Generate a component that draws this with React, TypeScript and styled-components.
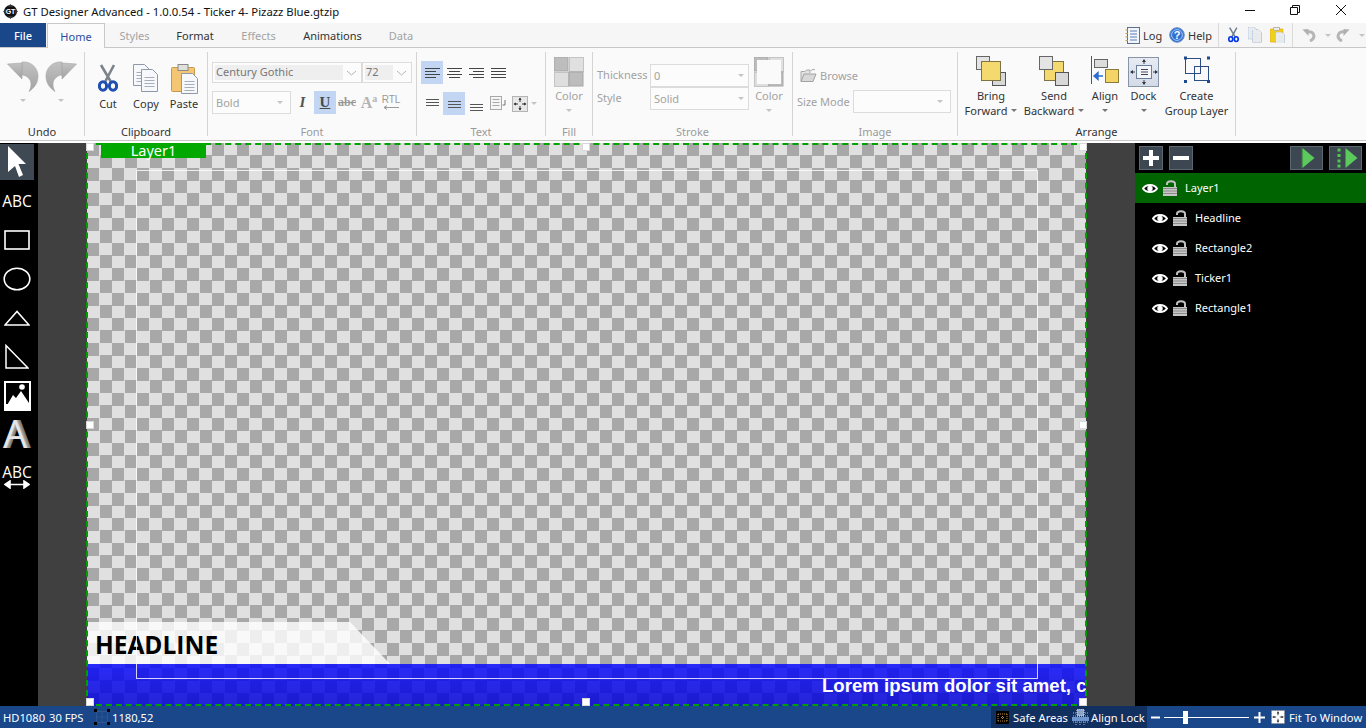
import React from 'react';
import styled, { createGlobalStyle } from 'styled-components';

const GlobalStyle = createGlobalStyle`
  html, body {
    margin: 0;
    padding: 0;
    background: #fff;
    overflow: hidden;
  }
  body {
    font-family: "Noto Sans", "Open Sans", sans-serif;
    font-size: 11px;
    color: #333;
  }
  * { box-sizing: border-box; }
`;

const Shell = styled.div`
  width: 1366px;
  height: 728px;
  display: flex;
  flex-direction: column;
  overflow: hidden;
`;

/* title bar */
const TitleBar = styled.div`
  height: 23px;
  display: flex;
  align-items: center;
  background: #fff;
  padding: 0 2.5px 0 3px;
`;
const TitleText = styled.div`
  margin-left: 5px;
  font-size: 11.3px;
  color: #111;
  flex: 1;
`;
const WinButton = styled.div`
  width: 45.5px;
  height: 23px;
  display: flex;
  align-items: center;
  justify-content: center;
  padding-bottom: 3px;
`;

/* tabs */
const TabBar = styled.div`
  height: 25px;
  display: flex;
  background: #f6f6f6;
  border-bottom: 1px solid #c8c8c8;
`;
const FileTab = styled.div`
  width: 46px;
  height: 24px;
  background: #19478a;
  color: #fff;
  font-weight: 500;
  display: flex;
  align-items: center;
  justify-content: center;
`;
const Tab = styled.div<{ $active?: boolean; $off?: boolean; $w: number }>`
  width: ${p => p.$w}px;
  height: ${p => (p.$active ? 25 : 24)}px;
  display: flex;
  align-items: center;
  justify-content: center;
  color: ${p => (p.$active ? '#2b4f9e' : p.$off ? '#a3a3a3' : '#333')};
  background: ${p => (p.$active ? '#fbfbfb' : 'transparent')};
  border: ${p => (p.$active ? '1px solid #c8c8c8' : 'none')};
  border-bottom: none;
  margin-left: ${p => (p.$active ? 1 : 0)}px;
  z-index: 1;
`;
const QuickTools = styled.div`
  margin-left: auto;
  display: flex;
  align-items: center;
  height: 24px;
`;
const QuickItem = styled.div<{ $w: number; $sep?: boolean }>`
  width: ${p => p.$w}px;
  height: 24px;
  display: flex;
  align-items: center;
  gap: 3px;
  border-right: ${p => (p.$sep ? '1px solid #dadada' : 'none')};
`;
const QuickIcon = styled.span`
  display: flex;
  filter: saturate(1.6) contrast(1.5) brightness(0.92);
`;

/* ribbon */
const Ribbon = styled.div`
  height: 93px;
  margin-bottom: 2px;
  display: flex;
  background: #fafafa;
  border-bottom: 1px solid #c8c8c8;
`;
const Separator = styled.div`
  width: 1px;
  margin: 4px 0;
  background: #d4d4d4;
`;
const Group = styled.div<{ $w: number }>`
  width: ${p => p.$w}px;
  display: flex;
  flex-direction: column;
`;
const GroupBody = styled.div<{ $pad?: string }>`
  height: 76px;
  display: flex;
  padding: ${p => p.$pad || '0'};
`;
const GroupLabel = styled.div<{ $off?: boolean }>`
  height: 16px;
  line-height: 16px;
  text-align: center;
  color: ${p => (p.$off ? '#9a9a9a' : '#333')};
`;
const BigButton = styled.div<{ $w: number; $off?: boolean; $ml?: number; $pt?: number }>`
  width: ${p => p.$w}px;
  margin-left: ${p => p.$ml || 0}px;
  padding-top: ${p => p.$pt || 0}px;
  display: flex;
  flex-direction: column;
  align-items: center;
  color: ${p => (p.$off ? '#a3a3a3' : '#333')};
`;
const IconSlot = styled.div<{ $h: number }>`
  height: ${p => p.$h}px;
  display: flex;
  align-items: flex-start;
  justify-content: center;
`;
const BigLabel = styled.div`
  height: 15px;
  line-height: 15px;
  white-space: nowrap;
  display: flex;
  align-items: center;
  gap: 4px;
`;
const Caret = styled.span<{ $light?: boolean }>`
  display: inline-block;
  width: 0;
  height: 0;
  border-left: 3.5px solid transparent;
  border-right: 3.5px solid transparent;
  border-top: 3.5px solid ${p => (p.$light ? '#c4c4c4' : '#777')};
`;
const SlotCaret = styled(Caret)`
  margin-top: 6px;
`;
const FontColumn = styled.div`
  display: flex;
  flex-direction: column;
  gap: 8px;
`;
const Row = styled.div<{ $gap?: number; $ml?: number }>`
  display: flex;
  align-items: center;
  gap: ${p => p.$gap || 0}px;
  margin-left: ${p => p.$ml || 0}px;
`;
const Combo = styled.div<{ $w: number; $h: number }>`
  width: ${p => p.$w}px;
  height: ${p => p.$h}px;
  border: 1px solid #dcdcdc;
  background: #fcfcfc;
  display: flex;
  align-items: center;
  padding: 2px 2px 2px 3px;
  color: #a2a2a2;
`;
const ComboField = styled.div<{ $w: number }>`
  width: ${p => p.$w}px;
  height: 100%;
  margin-left: -1px;
  background: #efefef;
  display: flex;
  align-items: center;
  color: #777;
  padding: 0 0 2px 1px;
`;
const ComboArrow = styled.div`
  margin-left: auto;
  display: flex;
  align-items: center;
  width: 16px;
  justify-content: center;
`;
const FontTool = styled.div<{ $active?: boolean; $w?: number }>`
  width: ${p => p.$w || 22}px;
  height: 23px;
  display: flex;
  align-items: center;
  justify-content: center;
  background: ${p => (p.$active ? '#c2d5f2' : 'transparent')};
`;
const SerifGlyph = styled.span<{ $c?: string; $italic?: boolean; $under?: boolean; $strike?: boolean; $s?: number }>`
  font-family: "Liberation Serif", serif;
  font-size: ${p => p.$s || 15}px;
  font-weight: 700;
  font-style: ${p => (p.$italic ? 'italic' : 'normal')};
  color: ${p => p.$c || '#555'};
  text-decoration: ${p => (p.$under ? 'underline' : p.$strike ? 'line-through' : 'none')};
`;
const SmallA = styled.sup`
  font-size: 10px;
  line-height: 0;
`;
const RtlGlyph = styled.div`
  display: flex;
  flex-direction: column;
  align-items: center;
  font-family: "Liberation Sans", sans-serif;
  font-size: 10px;
  line-height: 10px;
  color: #9a9a9a;
`;
const TextColumn = styled.div`
  display: flex;
  flex-direction: column;
  gap: 8px;
  padding: 13px 0 0 4px;
`;
const StrokeGrid = styled.div`
  display: grid;
  grid-template-columns: 53px 99px;
  grid-auto-rows: 23px;
  align-items: center;
  padding: 16px 0 0 4px;
  color: #a2a2a2;
`;
const StrokeLabel = styled.span`
  padding-bottom: 2px;
`;
const StrokeInput = styled.div`
  height: 23px;
  border: 1px solid #dcdcdc;
  background: #fcfcfc;
  display: flex;
  align-items: center;
  justify-content: space-between;
  padding: 0 4px 1px 3px;
`;
const ImageColumn = styled.div`
  display: flex;
  flex-direction: column;
  padding: 20px 0 0 4px;
  color: #a2a2a2;
  gap: 7px;
`;
const SizeLabel = styled.span`
  width: 56px;
  white-space: nowrap;
`;
const DockFrame = styled.div`
  width: 31px;
  height: 30px;
  border: 1px solid #8793a6;
  background: linear-gradient(#e6ebf3, #d3dbe8);
  display: flex;
  align-items: center;
  justify-content: center;
  margin-top: 1px;
`;

/* workspace */
const Workspace = styled.div`
  height: 563px;
  display: grid;
  grid-template-columns: 38px 49px 999px 49px 231px;
  background: #000;
`;
const ToolColumn = styled.div`
  background: #000;
  display: flex;
  flex-direction: column;
  align-items: center;
  padding: 1px 4px 0 0;
`;
const ToolSlot = styled.div<{ $active?: boolean; $h: number }>`
  width: 34px;
  height: ${p => p.$h}px;
  display: flex;
  flex-direction: column;
  align-items: center;
  justify-content: center;
  background: ${p => (p.$active ? '#3e4954' : 'transparent')};
  color: #fff;
`;
const ToolText = styled.span`
  font-family: "Open Sans", sans-serif;
  font-size: 15.5px;
  line-height: 16px;
  color: #fff;
`;
const ThreeDLetter = styled.span`
  font-family: "Open Sans", sans-serif;
  font-weight: 400;
  font-size: 38px;
  line-height: 34px;
  color: #e6e6e6;
  text-shadow: 1px 0 0 #b0b0b0, 2px 0 0 #989898, 3px 0 0 #868686, 4px 0 0 #777;
  margin-left: -4px;
`;
const Gutter = styled.div`
  background: #404040;
`;
const Canvas = styled.div`
  position: relative;
  background-color: #a8a8a8;
  background-image: conic-gradient(#e0e0e0 25%, #a8a8a8 0 50%, #e0e0e0 0 75%, #a8a8a8 0);
  background-size: 25px 25px;
`;
const SelectionBox = styled.div`
  position: absolute;
  inset: 0 -1px 0 -1px;
  border: 2px dashed #00a000;
  z-index: 3;
`;
const LayerTag = styled.div`
  position: absolute;
  left: 14px;
  top: 0;
  width: 105px;
  height: 15px;
  background: #00a800;
  color: #fff;
  font-size: 14.5px;
  line-height: 15px;
  text-align: center;
  z-index: 4;
`;
const Handle = styled.div<{ $x: number; $y: number }>`
  position: absolute;
  left: ${p => p.$x}px;
  top: ${p => p.$y}px;
  width: 8px;
  height: 8px;
  background: #fff;
  border: 1px solid #d8d8d8;
  z-index: 5;
`;
const SafeFrame = styled.div`
  position: absolute;
  left: 49px;
  top: 27px;
  width: 902px;
  height: 509px;
  border: 1px solid rgba(255, 255, 255, 0.8);
  z-index: 2;
`;
const HeadlineShape = styled.div`
  position: absolute;
  left: 0;
  top: 479px;
  width: 303px;
  height: 42px;
  background: rgba(255, 255, 255, 0.8);
  clip-path: polygon(0 0, 263px 0, 303px 42px, 0 42px);
`;
const HeadlineText = styled.div`
  position: absolute;
  left: 8px;
  top: 486px;
  font-family: "Open Sans", sans-serif;
  font-weight: 700;
  font-size: 24.5px;
  line-height: 32px;
  color: #000;
`;
const TickerBand = styled.div`
  position: absolute;
  left: 0;
  right: 0;
  top: 521px;
  height: 42px;
  background: linear-gradient(rgba(8, 8, 255, 0.84), rgba(0, 0, 212, 0.84));
  overflow: hidden;
  padding: 11px 0 0 735px;
  font-family: "Liberation Sans", sans-serif;
  font-weight: 700;
  font-size: 18.6px;
  line-height: 22px;
  color: #fff;
  white-space: nowrap;
`;

/* layers */
const LayerPanel = styled.div`
  background: #000;
  display: flex;
  flex-direction: column;
`;
const PanelTools = styled.div`
  height: 30px;
  display: flex;
  align-items: center;
  padding: 0 4px;
  gap: 6px;
`;
const PanelButton = styled.div<{ $w: number; $ml?: number }>`
  width: ${p => p.$w}px;
  height: 24px;
  margin-left: ${p => p.$ml || 0}px;
  background: #3c4751;
  border: 1px solid #5b6771;
  display: flex;
  align-items: center;
  justify-content: center;
`;
const LayerRow = styled.div<{ $active?: boolean; $child?: boolean }>`
  height: 30px;
  display: flex;
  align-items: center;
  gap: 5px;
  padding-left: ${p => (p.$child ? 17 : 7)}px;
  background: ${p => (p.$active ? '#006400' : 'transparent')};
  color: #fff;
`;
const LayerName = styled.span`
  margin-left: 3px;
  padding-bottom: 2px;
`;

/* status */
const StatusBar = styled.div`
  height: 22px;
  background: #19478a;
  color: #fff;
  display: flex;
  align-items: center;
  padding-left: 3px;
  font-size: 11.2px;
`;
const StatusText = styled.span<{ $w?: number; $ml?: number }>`
  width: ${p => (p.$w ? `${p.$w}px` : 'auto')};
  margin-left: ${p => p.$ml || 0}px;
  white-space: nowrap;
`;
const StatusDark = styled.div`
  margin-left: auto;
  width: 156px;
  height: 22px;
  background: #12305f;
  display: flex;
  align-items: center;
  padding-left: 5px;
`;
const SliderTrack = styled.div`
  width: 85px;
  height: 1px;
  background: #fff;
  margin: 0 5px 0 4px;
  position: relative;
`;
const SliderThumb = styled.div`
  position: absolute;
  left: 19px;
  top: -6px;
  width: 5px;
  height: 13px;
  background: #fff;
`;
const ZoomGroup = styled.div`
  width: 219px;
  display: flex;
  align-items: center;
  padding-left: 4px;
`;
const FitSlot = styled.div`
  margin: 0 4px 0 6px;
  display: flex;
`;

/* icons */
const BIG_ARROW = 'M15 1 C25 0 31.5 8 31 16 C30.5 23 27 27 22 30.5 C25 25 24.5 20 21.5 17 C19.5 15 17 14 15 14 Z';

const ArrowIcon = ({ flip, id }: { flip?: boolean; id: string }) => (
  <svg width="32" height="32" viewBox="0 0 32 32" style={flip ? { transform: 'scaleX(-1)' } : undefined}>
    <defs>
      <linearGradient id={id} x1="0" y1="0" x2="0" y2="1">
        <stop offset="0" stopColor="#c2c2c2" />
        <stop offset="1" stopColor="#a2a2a2" />
      </linearGradient>
    </defs>
    <path d={BIG_ARROW} fill={`url(#${id})`} stroke="#a5a5a5" strokeWidth="0.6" />
    <path d="M0.5 3 L15 2 V18 Z" fill={`url(#${id})`} stroke="#a5a5a5" strokeWidth="0.6" />
  </svg>
);

const ScissorsIcon = ({ s = 1 }: { s?: number }) => (
  <svg width={20 * s} height={28 * s} viewBox="0 0 20 28">
    <path d="M3 1 L13 18 M16 1 L7 18" stroke="#7d838c" strokeWidth="2.6" />
    <ellipse cx="5" cy="22" rx="3.6" ry="4.3" fill="none" stroke="#1f4fb0" strokeWidth="3" />
    <ellipse cx="15" cy="22" rx="3.6" ry="4.3" fill="none" stroke="#1f4fb0" strokeWidth="3" />
  </svg>
);

const Sheet = ({ x, y, w, h }: { x: number; y: number; w: number; h: number }) => (
  <g>
    <path d={`M${x} ${y} H${x + w - 5} L${x + w} ${y + 5} V${y + h} H${x} Z`} fill="#f7f8fb" stroke="#8e98a8" />
    <path d={`M${x + 3} ${y + 8} H${x + w - 3} M${x + 3} ${y + 11} H${x + w - 3} M${x + 3} ${y + 14} H${x + w - 3} M${x + 3} ${y + 17} H${x + w - 3}`} stroke="#a4aebd" />
  </g>
);

const CopyIcon = ({ s = 1 }: { s?: number }) => (
  <svg width={26 * s} height={28 * s} viewBox="0 0 26 28">
    <Sheet x={0.5} y={0.5} w={16} h={21} />
    <Sheet x={8.5} y={5.5} w={16} h={22} />
  </svg>
);

const PasteIcon = ({ s = 1 }: { s?: number }) => (
  <svg width={27 * s} height={30 * s} viewBox="0 0 27 30">
    <rect x="0.5" y="3.5" width="23" height="24" rx="1" fill="#f4c572" stroke="#c59a4b" />
    <rect x="7" y="0.5" width="10" height="6" fill="#e0e0dc" stroke="#8a8a8a" />
    <Sheet x={10.5} y={9.5} w={16} h={20} />
  </svg>
);

const Chevron = () => (
  <svg width="11" height="6" viewBox="0 0 11 6">
    <path d="M1 1 L5.5 5 L10 1" fill="none" stroke="#b4b4b4" />
  </svg>
);

const AlignLines = ({ kind }: { kind: 'left' | 'center' | 'right' | 'full' }) => {
  const long = 15;
  const short = 11;
  const x = (w: number) => (kind === 'left' || kind === 'full' ? 0 : kind === 'center' ? (long - w) / 2 : long - w);
  const w = (i: number) => (kind === 'full' || i % 2 === 0 ? long : short);
  return (
    <svg width="15" height="12" viewBox="0 0 15 12">
      {[0, 1, 2, 3].map(i => (
        <rect key={i} x={x(w(i))} y={i * 3 + 1} width={w(i)} height="1" fill="#444" />
      ))}
    </svg>
  );
};

const VAlignLines = ({ dy }: { dy: number }) => (
  <svg width="15" height="16" viewBox="0 0 15 16">
    <g transform={`translate(0 ${dy})`}>
      <rect x="1" y="0" width="13" height="1" fill="#555" />
      <rect x="1" y="3" width="13" height="1" fill="#555" />
      <rect x="1" y="6" width="13" height="1" fill="#555" />
    </g>
  </svg>
);

const TextBoxIcon = () => (
  <svg width="17" height="15" viewBox="0 0 17 15">
    <rect x="0.5" y="0.5" width="11" height="13" fill="#f5f5f5" stroke="#a8a8a8" />
    <path d="M2.5 3.5 H9.5 M2.5 6.5 H9.5 M2.5 9.5 H9.5" stroke="#a8a8a8" />
    <path d="M15 4 V9 H12.5" fill="none" stroke="#777" />
  </svg>
);

const FitIcon = ({ dark, size = 16 }: { dark?: boolean; size?: number }) => (
  <svg width={size} height={size} viewBox="0 0 16 16">
    <rect x="0.5" y="0.5" width="15" height="15" fill={dark ? '#fff' : '#e8e8e8'} stroke="#777" strokeDasharray="1 1" />
    <path d="M8 2 V6 M8 10 V14 M2 8 H6 M10 8 H14" stroke="#333" />
    <path d="M8 1.5 L6.5 4 H9.5 Z M8 14.5 L6.5 12 H9.5 Z M1.5 8 L4 6.5 V9.5 Z M14.5 8 L12 6.5 V9.5 Z" fill="#333" />
  </svg>
);

const FillIcon = () => (
  <svg width="30" height="30" viewBox="0 0 30 30">
    <rect x="0" y="0" width="14" height="14" fill="#bdbdbd" stroke="#a6a6a6" />
    <rect x="15.5" y="0.5" width="14" height="14" fill="#e0e0e0" stroke="#c4c4c4" />
    <rect x="0.5" y="15.5" width="14" height="14" fill="#dedede" stroke="#c4c4c4" />
    <rect x="15" y="15" width="14" height="14" fill="#bdbdbd" stroke="#a6a6a6" />
  </svg>
);

const StrokeIcon = () => (
  <svg width="30" height="30" viewBox="0 0 30 30">
    <rect x="0" y="0" width="14" height="14" fill="#bdbdbd" stroke="#a6a6a6" />
    <rect x="15.5" y="0.5" width="14" height="14" fill="#e0e0e0" stroke="#c4c4c4" />
    <rect x="0.5" y="15.5" width="14" height="14" fill="#dedede" stroke="#c4c4c4" />
    <rect x="15" y="15" width="14" height="14" fill="#bdbdbd" stroke="#a6a6a6" />
    <rect x="3" y="3" width="24" height="24" fill="#fafafa" />
  </svg>
);

const FolderIcon = () => (
  <svg width="17" height="15" viewBox="0 0 17 15">
    <path d="M1 13.5 V3.5 H5 L6.5 2 H10 V5" fill="#e3e3e3" stroke="#a9a9a9" />
    <path d="M1 13.5 L4 6 H16 L13 13.5 Z" fill="#d8d8d8" stroke="#a2a2a2" />
    <path d="M11 3 C12 1 14 1 15 2" fill="none" stroke="#aaa" />
  </svg>
);

const Stack = ({ front }: { front: 'top' | 'bottom' }) => {
  const yellow = <rect x="5.5" y="5.5" width="19" height="19" fill="#f4d96f" stroke="#7d7344" />;
  const g1 = <rect x="0.5" y="0.5" width="13" height="13" fill="#e4e4e4" stroke="#666" />;
  const g2 = <rect x="16.5" y="16.5" width="13" height="13" fill="#d8d8d8" stroke="#555" />;
  return (
    <svg width="31" height="31" viewBox="0 0 31 31">
      {front === 'top' ? (
        <>
          {g1}
          {g2}
          {yellow}
        </>
      ) : (
        <>
          {yellow}
          {g1}
          {g2}
        </>
      )}
    </svg>
  );
};

const AlignIcon = () => (
  <svg width="28" height="29" viewBox="0 0 28 29">
    <path d="M0.5 0 V28" stroke="#2a5db0" />
    <rect x="3.5" y="3.5" width="13" height="8" fill="#dcdcdc" stroke="#666" />
    <rect x="14.5" y="13.5" width="13" height="13" fill="#f4d464" stroke="#8a7a3c" />
    <path d="M3 20 H12 M3 20 L7 16.5 V23.5 Z" fill="#2a6fd0" stroke="#2a6fd0" strokeWidth="1.4" />
  </svg>
);

const DockIcon = () => (
  <svg width="28" height="26" viewBox="0 0 28 26">
    <rect x="6.5" y="6.5" width="15" height="13" fill="#f3f6fb" stroke="#6a7f9a" />
    <path d="M11 10.5 H18 M11 13 H18 M11 15.5 H18 M14 1 V5 M14 21 V25 M1 13 H5 M23 13 H27" stroke="#445" />
    <path d="M14 0 L12 3 H16 Z M14 26 L12 23 H16 Z M0 13 L3 11 V15 Z M28 13 L25 11 V15 Z" fill="#334" />
  </svg>
);

const GroupLayerIcon = () => (
  <svg width="26" height="28" viewBox="0 0 26 28">
    <rect x="1.5" y="2.5" width="15" height="15" fill="none" stroke="#2a4d85" />
    <rect x="10.5" y="10.5" width="14" height="14" fill="none" stroke="#2a4d85" />
    <rect x="0" y="0.5" width="3" height="3" fill="#1f4a90" />
    <rect x="23" y="0.5" width="3" height="3" fill="#1f4a90" />
    <rect x="0" y="24" width="3" height="3" fill="#1f4a90" />
    <rect x="23" y="24" width="3" height="3" fill="#1f4a90" />
  </svg>
);

const LogIcon = () => (
  <svg width="15" height="17" viewBox="0 0 15 17">
    <rect x="2.5" y="0.5" width="12" height="16" fill="#f2f5fa" stroke="#5d6f8c" />
    <path d="M5 4 H12 M5 7 H12 M5 10 H12 M5 13 H12" stroke="#5d7fb5" />
    <path d="M0.5 3 H3 M0.5 6.5 H3 M0.5 10 H3 M0.5 13.5 H3" stroke="#c89a3a" />
  </svg>
);

const HelpIcon = () => (
  <svg width="16" height="16" viewBox="0 0 16 16">
    <circle cx="8" cy="8" r="7.3" fill="#2f6fd4" stroke="#6b8fc4" />
    <circle cx="8" cy="8" r="5.4" fill="none" stroke="#a9c8f2" />
    <text x="8" y="12" textAnchor="middle" fontSize="11" fontWeight="700" fontFamily="Liberation Sans" fill="#fff">?</text>
  </svg>
);

const SmallArrow = ({ flip }: { flip?: boolean }) => (
  <svg width="14" height="14" viewBox="0 0 14 14" style={flip ? { transform: 'scaleX(-1)' } : undefined}>
    <path d="M5 4 C9 3 12 5 12 8 C12 10 10 12 8 13" fill="none" stroke="#b5b5b5" strokeWidth="3" />
    <path d="M0.5 1.5 L6.5 1 V8 Z" fill="#b0b0b0" />
  </svg>
);

const EyeIcon = () => (
  <svg width="16" height="11" viewBox="0 0 16 11">
    <path d="M1 5.5 C4 0.8 12 0.8 15 5.5 C12 10.2 4 10.2 1 5.5 Z" fill="#000" stroke="#fff" strokeWidth="2" />
    <circle cx="8" cy="5.5" r="2.7" fill="#fff" />
  </svg>
);

const LockIcon = () => (
  <svg width="14" height="16" viewBox="0 0 14 16">
    <path d="M4 5 V4 C4 0.4 12 0.4 12 4 V7" fill="none" stroke="#c2c2c2" strokeWidth="2" />
    <rect x="0" y="7" width="14" height="9" fill="#c6c6c6" />
    <path d="M0 8.5 H14 M0 11 H14 M0 13.5 H14" stroke="#8c8c8c" />
  </svg>
);

const SafeIcon = () => (
  <svg width="13" height="13" viewBox="0 0 13 13">
    <rect x="0" y="0" width="13" height="13" fill="#000" />
    <path d="M2 3 H11 M2 10 H11 M2 3 V10 M11 3 V10 M6.5 5 V8 M5 6.5 H8" stroke="#b98a3a" strokeDasharray="1 1" />
  </svg>
);

const AlignLockIcon = () => (
  <svg width="17" height="17" viewBox="0 0 17 17">
    <path d="M1 4 H16 M1 7 H16 M1 13 H16 M4 13 V17 M8 13 V17 M12 13 V17" stroke="#9fb4d2" strokeDasharray="1 1" />
    <rect x="0" y="8" width="17" height="4" fill="#6f95cf" />
    <rect x="5" y="0" width="7" height="7" fill="#8ba3c5" stroke="#dbe4f0" strokeDasharray="1 1" />
  </svg>
);

const DragIcon = () => (
  <svg width="16" height="16" viewBox="0 0 16 16">
    <rect x="2.5" y="2.5" width="11" height="11" fill="none" stroke="#2f5690" />
    <path d="M8 2 V14 M2 8 H14" stroke="#2f5690" />
    <rect x="0" y="0" width="3" height="3" fill="#000" />
    <rect x="13" y="0" width="3" height="3" fill="#000" />
    <rect x="0" y="13" width="3" height="3" fill="#000" />
    <rect x="13" y="13" width="3" height="3" fill="#000" />
  </svg>
);

const PlayIcon = ({ frames }: { frames?: boolean }) => (
  <svg width="28" height="20" viewBox="0 0 28 20">
    {frames ? (
      <>
        <rect x="5.5" y="0.5" width="3" height="3" fill="#4fc74f" />
        <rect x="5.5" y="6" width="3" height="3" fill="#4fc74f" />
        <rect x="5.5" y="11.5" width="3" height="3" fill="#4fc74f" />
        <rect x="5.5" y="16.5" width="3" height="3" fill="#4fc74f" />
        <path d="M13.5 0 L25.5 10 L13.5 20 Z" fill="#5cc95c" />
      </>
    ) : (
      <>
        <rect x="8.5" y="0" width="1" height="20" fill="#2f7f2f" />
        <path d="M9.5 0 L21.5 10 L9.5 20 Z" fill="#5cc95c" />
      </>
    )}
  </svg>
);

const layers = ['Headline', 'Rectangle2', 'Ticker1', 'Rectangle1'];

const handles: [number, number][] = [
  [-1, 0], [495, 0], [992, 0],
  [-1, 278], [992, 278],
  [-1, 555], [495, 555], [992, 555],
];

export default function App() {
  return (
    <Shell>
      <GlobalStyle />
      <TitleBar>
        <svg width="15" height="15" viewBox="0 0 15 15">
          <circle cx="7.5" cy="7.5" r="6.5" fill="#111" />
          <path d="M0 7.5 L3 5 V10 Z M15 7.5 L12 5 V10 Z M7.5 0 L5 3 H10 Z M7.5 15 L5 12 H10 Z" fill="#333" />
          <text x="7.5" y="10" textAnchor="middle" fontSize="7" fontWeight="700" fontFamily="Liberation Sans" fill="#fff">GT</text>
        </svg>
        <TitleText>GT Designer Advanced - 1.0.0.54 - Ticker 4- Pizazz Blue.gtzip</TitleText>
        <WinButton>
          <svg width="10" height="10" viewBox="0 0 10 10"><path d="M0 5.5 H10" stroke="#111" /></svg>
        </WinButton>
        <WinButton>
          <svg width="10" height="10" viewBox="0 0 10 10">
            <path d="M2.5 2.5 V0.5 H9.5 V7.5 H7.5 M0.5 2.5 H7.5 V9.5 H0.5 Z" fill="none" stroke="#111" />
          </svg>
        </WinButton>
        <WinButton>
          <svg width="10" height="10" viewBox="0 0 10 10"><path d="M0 0 L10 10 M10 0 L0 10" stroke="#111" /></svg>
        </WinButton>
      </TitleBar>

      <TabBar>
        <FileTab>File</FileTab>
        <Tab $active $w={58}>Home</Tab>
        <Tab $off $w={59}>Styles</Tab>
        <Tab $w={62}>Format</Tab>
        <Tab $off $w={65}>Effects</Tab>
        <Tab $w={83}>Animations</Tab>
        <Tab $off $w={54}>Data</Tab>
        <QuickTools>
          <QuickItem $w={44}><LogIcon />Log</QuickItem>
          <QuickItem $w={50} $sep><HelpIcon />Help</QuickItem>
          <QuickItem $w={9} />
          <QuickItem $w={20}><QuickIcon><ScissorsIcon s={0.55} /></QuickIcon></QuickItem>
          <QuickItem $w={22}><QuickIcon><CopyIcon s={0.55} /></QuickIcon></QuickItem>
          <QuickItem $w={23} $sep><QuickIcon><PasteIcon s={0.55} /></QuickIcon></QuickItem>
          <QuickItem $w={9} />
          <QuickItem $w={23}><SmallArrow /></QuickItem>
          <QuickItem $w={11}><Caret $light /></QuickItem>
          <QuickItem $w={23}><SmallArrow flip /></QuickItem>
          <QuickItem $w={7}><Caret $light /></QuickItem>
        </QuickTools>
      </TabBar>

      <Ribbon>
        <Group $w={84}>
          <GroupBody $pad="13px 0 0 4px">
            <BigButton $w={38}>
              <IconSlot $h={38}><ArrowIcon id="undoFill" /></IconSlot>
              <Caret $light />
            </BigButton>
            <BigButton $w={38}>
              <IconSlot $h={38}><ArrowIcon id="redoFill" flip /></IconSlot>
              <Caret $light />
            </BigButton>
          </GroupBody>
          <GroupLabel>Undo</GroupLabel>
        </Group>
        <Separator />
        <Group $w={122}>
          <GroupBody $pad="16px 0 0 4px">
            <BigButton $w={38}>
              <IconSlot $h={32}><ScissorsIcon /></IconSlot>
              <BigLabel>Cut</BigLabel>
            </BigButton>
            <BigButton $w={38}>
              <IconSlot $h={32}><CopyIcon /></IconSlot>
              <BigLabel>Copy</BigLabel>
            </BigButton>
            <BigButton $w={38}>
              <IconSlot $h={32}><PasteIcon /></IconSlot>
              <BigLabel>Paste</BigLabel>
            </BigButton>
          </GroupBody>
          <GroupLabel>Clipboard</GroupLabel>
        </Group>
        <Separator />
        <Group $w={208}>
          <GroupBody $pad="14px 0 0 4px">
            <FontColumn>
              <Row $gap={0}>
                <Combo $w={150} $h={21}>
                  <ComboField $w={128}>Century Gothic</ComboField>
                  <ComboArrow><Chevron /></ComboArrow>
                </Combo>
                <Combo $w={50} $h={21}>
                  <ComboField $w={29}>72</ComboField>
                  <ComboArrow><Chevron /></ComboArrow>
                </Combo>
              </Row>
              <Row>
                <Combo $w={79} $h={23}>
                  Bold
                  <ComboArrow><Caret $light /></ComboArrow>
                </Combo>
                <FontTool $w={23}><SerifGlyph $italic>I</SerifGlyph></FontTool>
                <FontTool $active><SerifGlyph $under $c="#4a4a4a">U</SerifGlyph></FontTool>
                <FontTool><SerifGlyph $strike $c="#999" $s={12}>abc</SerifGlyph></FontTool>
                <FontTool><SerifGlyph $c="#b4b4b4" $s={16}>A<SmallA>a</SmallA></SerifGlyph></FontTool>
                <FontTool>
                  <RtlGlyph>RTL<svg width="15" height="5" viewBox="0 0 15 5"><path d="M0 2.5 H15 M0 2.5 L3 0.5 M0 2.5 L3 4.5" stroke="#9a9a9a" fill="none" /></svg></RtlGlyph>
                </FontTool>
              </Row>
            </FontColumn>
          </GroupBody>
          <GroupLabel $off>Font</GroupLabel>
        </Group>
        <Separator />
        <Group $w={128}>
          <GroupBody>
            <TextColumn>
              <Row>
                <FontTool $active><AlignLines kind="left" /></FontTool>
                <FontTool><AlignLines kind="center" /></FontTool>
                <FontTool><AlignLines kind="right" /></FontTool>
                <FontTool><AlignLines kind="full" /></FontTool>
              </Row>
              <Row>
                <FontTool><VAlignLines dy={3} /></FontTool>
                <FontTool $active><VAlignLines dy={5} /></FontTool>
                <FontTool><VAlignLines dy={8} /></FontTool>
                <FontTool><TextBoxIcon /></FontTool>
                <FontTool><FitIcon /></FontTool>
                <Caret $light />
              </Row>
            </TextColumn>
          </GroupBody>
          <GroupLabel $off>Text</GroupLabel>
        </Group>
        <Separator />
        <Group $w={46}>
          <GroupBody $pad="9px 0 0 0">
            <BigButton $w={46} $off>
              <IconSlot $h={31}><FillIcon /></IconSlot>
              <BigLabel>Color</BigLabel>
              <IconSlot $h={15}><SlotCaret $light /></IconSlot>
            </BigButton>
          </GroupBody>
          <GroupLabel $off>Fill</GroupLabel>
        </Group>
        <Separator />
        <Group $w={199}>
          <GroupBody>
            <StrokeGrid>
              <StrokeLabel>Thickness</StrokeLabel>
              <StrokeInput>0<Caret $light /></StrokeInput>
              <StrokeLabel>Style</StrokeLabel>
              <StrokeInput>Solid<Caret $light /></StrokeInput>
            </StrokeGrid>
            <BigButton $w={30} $ml={5} $pt={9} $off>
              <IconSlot $h={31}><StrokeIcon /></IconSlot>
              <BigLabel>Color</BigLabel>
              <IconSlot $h={15}><SlotCaret $light /></IconSlot>
            </BigButton>
          </GroupBody>
          <GroupLabel $off>Stroke</GroupLabel>
        </Group>
        <Separator />
        <Group $w={164}>
          <GroupBody>
            <ImageColumn>
              <Row $gap={3} $ml={3}><FolderIcon />Browse</Row>
              <Row>
                <SizeLabel>Size Mode</SizeLabel>
                <Combo $w={98} $h={23}><ComboArrow><Caret $light /></ComboArrow></Combo>
              </Row>
            </ImageColumn>
          </GroupBody>
          <GroupLabel $off>Image</GroupLabel>
        </Group>
        <Separator />
        <Group $w={277}>
          <GroupBody $pad="8px 0 0 0">
            <BigButton $w={62} $ml={2}>
              <IconSlot $h={32}><Stack front="top" /></IconSlot>
              <BigLabel>Bring</BigLabel>
              <BigLabel>Forward <Caret /></BigLabel>
            </BigButton>
            <BigButton $w={64}>
              <IconSlot $h={32}><Stack front="bottom" /></IconSlot>
              <BigLabel>Send</BigLabel>
              <BigLabel>Backward <Caret /></BigLabel>
            </BigButton>
            <BigButton $w={38}>
              <IconSlot $h={32}><AlignIcon /></IconSlot>
              <BigLabel>Align</BigLabel>
              <IconSlot $h={15}><SlotCaret /></IconSlot>
            </BigButton>
            <BigButton $w={39}>
              <IconSlot $h={32}><DockFrame><DockIcon /></DockFrame></IconSlot>
              <BigLabel>Dock</BigLabel>
              <IconSlot $h={15}><SlotCaret /></IconSlot>
            </BigButton>
            <BigButton $w={67}>
              <IconSlot $h={32}><GroupLayerIcon /></IconSlot>
              <BigLabel>Create</BigLabel>
              <BigLabel>Group Layer</BigLabel>
            </BigButton>
          </GroupBody>
          <GroupLabel>Arrange</GroupLabel>
        </Group>
        <Separator />
      </Ribbon>

      <Workspace>
        <ToolColumn>
          <ToolSlot $active $h={36}>
            <svg width="20" height="32" viewBox="0 0 20 32">
              <path d="M1 0 L19 18 H11.5 L16 29 L12 31 L8 20 L1 26 Z" fill="#fff" />
            </svg>
          </ToolSlot>
          <ToolSlot $h={41}><ToolText>ABC</ToolText></ToolSlot>
          <ToolSlot $h={37}>
            <svg width="26" height="20" viewBox="0 0 26 20"><rect x="1" y="1" width="24" height="18" fill="none" stroke="#fff" strokeWidth="1.6" /></svg>
          </ToolSlot>
          <ToolSlot $h={41}>
            <svg width="28" height="24" viewBox="0 0 28 24"><ellipse cx="14" cy="12" rx="12.8" ry="10.8" fill="none" stroke="#fff" strokeWidth="1.6" /></svg>
          </ToolSlot>
          <ToolSlot $h={37}>
            <svg width="26" height="16" viewBox="0 0 26 16"><path d="M1 15 L13 1.5 L25 15 Z" fill="none" stroke="#fff" strokeWidth="1.5" /></svg>
          </ToolSlot>
          <ToolSlot $h={41}>
            <svg width="24" height="25" viewBox="0 0 24 25"><path d="M1 1.5 V24 H23 Z" fill="none" stroke="#fff" strokeWidth="1.5" /></svg>
          </ToolSlot>
          <ToolSlot $h={37}>
            <svg width="27" height="30" viewBox="0 0 27 30">
              <rect width="27" height="30" fill="#fff" />
              <rect x="2" y="2" width="23" height="21" fill="#000" />
              <circle cx="18" cy="6" r="2.8" fill="#fff" />
              <path d="M2 26 L9 14 L12 17 L17 10 L25 22 V26 Z" fill="#fff" />
            </svg>
          </ToolSlot>
          <ToolSlot $h={37}><ThreeDLetter>A</ThreeDLetter></ToolSlot>
          <ToolSlot $h={50}>
            <ToolText>ABC</ToolText>
            <svg width="26" height="9" viewBox="0 0 26 9"><path d="M1 4.5 H25 M1 4.5 L6 1 V8 Z M25 4.5 L20 1 V8 Z" stroke="#fff" strokeWidth="1.6" fill="#fff" /></svg>
          </ToolSlot>
        </ToolColumn>
        <Gutter />
        <Canvas>
          <SafeFrame />
          <HeadlineShape />
          <HeadlineText>HEADLINE</HeadlineText>
          <TickerBand>Lorem ipsum dolor sit amet, c</TickerBand>
          <SelectionBox />
          <LayerTag>Layer1</LayerTag>
          {handles.map(([x, y]) => <Handle key={`${x}-${y}`} $x={x} $y={y} />)}
        </Canvas>
        <Gutter />
        <LayerPanel>
          <PanelTools>
            <PanelButton $w={24}>
              <svg width="18" height="18" viewBox="0 0 18 18"><path d="M9 1 V17 M1 9 H17" stroke="#fff" strokeWidth="4" /></svg>
            </PanelButton>
            <PanelButton $w={24}>
              <svg width="18" height="6" viewBox="0 0 18 6"><path d="M1 3 H17" stroke="#fff" strokeWidth="4" /></svg>
            </PanelButton>
            <PanelButton $w={33} $ml={91}><PlayIcon /></PanelButton>
            <PanelButton $w={33}><PlayIcon frames /></PanelButton>
          </PanelTools>
          <LayerRow $active>
            <EyeIcon />
            <LockIcon />
            <LayerName>Layer1</LayerName>
          </LayerRow>
          {layers.map(name => (
            <LayerRow $child key={name}>
              <EyeIcon />
              <LockIcon />
              <LayerName>{name}</LayerName>
            </LayerRow>
          ))}
        </LayerPanel>
      </Workspace>

      <StatusBar>
        <StatusText $w={46}>HD1080</StatusText>
        <StatusText $w={45}>30 FPS</StatusText>
        <DragIcon />
        <StatusText $ml={2}>1180,52</StatusText>
        <StatusDark>
          <SafeIcon />
          <StatusText $w={59} $ml={4}>Safe Areas</StatusText>
          <AlignLockIcon />
          <StatusText $ml={2}>Align Lock</StatusText>
        </StatusDark>
        <ZoomGroup>
          <svg width="9" height="3" viewBox="0 0 9 3"><rect width="9" height="2" y="0.5" fill="#fff" /></svg>
          <SliderTrack><SliderThumb /></SliderTrack>
          <svg width="11" height="11" viewBox="0 0 11 11"><path d="M5.5 0 V11 M0 5.5 H11" stroke="#fff" strokeWidth="2" /></svg>
          <FitSlot><FitIcon dark size={14} /></FitSlot>
          <StatusText>Fit To Window</StatusText>
        </ZoomGroup>
      </StatusBar>
    </Shell>
  );
}
